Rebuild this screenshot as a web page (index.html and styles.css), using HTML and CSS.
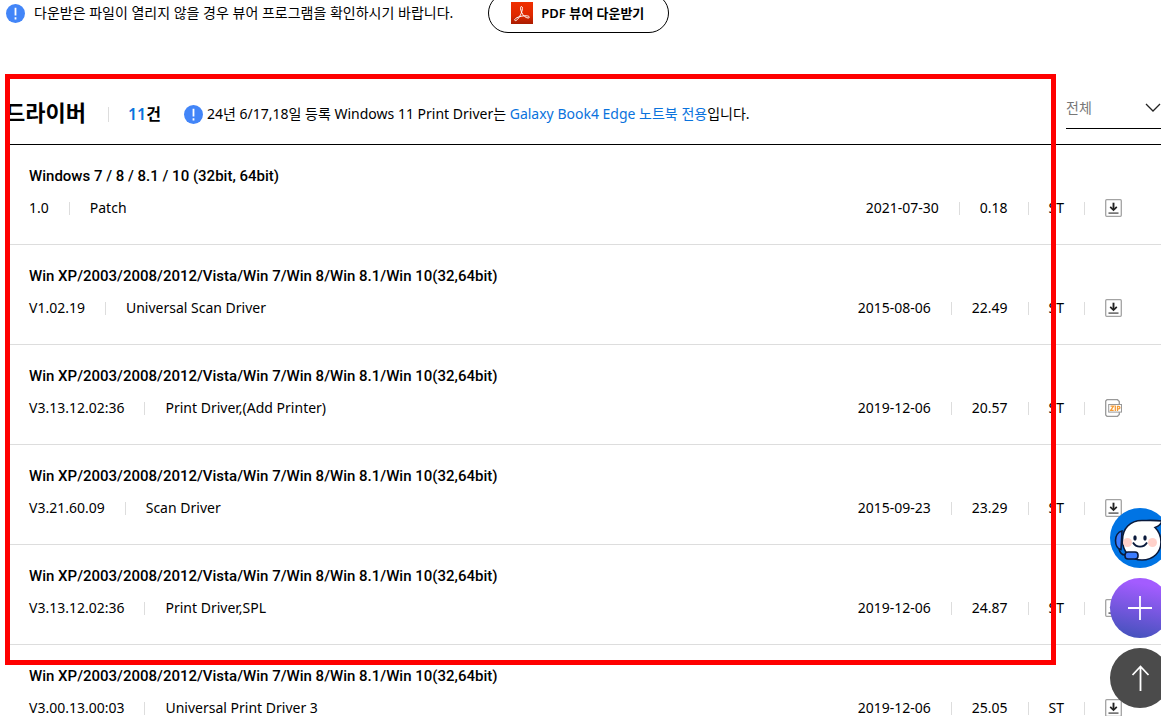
FILE: index.html
```html
<!DOCTYPE html>
<html lang="ko">
<head>
<meta charset="utf-8">
<title>드라이버 다운로드</title>
<link rel="stylesheet" href="styles.css">
</head>
<body>
<svg class="defs" aria-hidden="true">
  <symbol id="notice" viewBox="0 0 18 18"><circle cx="9" cy="9" r="9" fill="#4285f8"/><path d="M9 3.5v7.5M9 12.6v2" stroke="#fff" stroke-width="1.7"/></symbol>
  <symbol id="download" viewBox="0 0 17 18"><rect x=".7" y=".7" width="15.6" height="16.6" rx="1" fill="#fff" stroke="#a3a3a3" stroke-width="1.3"/><path d="M3.5 14.1h10" stroke="#555" stroke-width="1.4"/><path d="M8.5 3.7v7" stroke="#222" stroke-width="1.9"/><path d="M5.2 7.8l3.3 3.3 3.3-3.3" fill="none" stroke="#222" stroke-width="1.7"/></symbol>
  <symbol id="zip" viewBox="0 0 17 18"><path d="M14.3 5V2.5L12.5.7H2L.7 2v14L2 17.3h10.5l1.8-1.8V13" fill="#fff" stroke="#999" stroke-width="1.3"/><rect x="3.7" y="5.5" width="12.8" height="7.6" fill="#fff" stroke="#999"/><path d="M5.5 7.2h3l-2.8 4.2h3M10.3 6.6v5.3M12.5 12V7.3h1.2q1.2 0 1.2 1.2t-1.2 1.3h-1" fill="none" stroke="#f59b35" stroke-width="1.3"/></symbol>
</svg>

<div class="viewer">
  <p class="viewer-note"><svg class="icon-notice"><use href="#notice"/></svg>다운받은 파일이 열리지 않을 경우 뷰어 프로그램을 확인하시기 바랍니다.</p>
  <button class="pdf" type="button">
    <svg class="pdf-icon" viewBox="0 0 22 22">
      <defs><linearGradient id="red" x2="0" y2="1"><stop offset="0" stop-color="#f02f00"/><stop offset=".6" stop-color="#df2800"/><stop offset="1" stop-color="#a91c00"/></linearGradient></defs>
      <path fill="url(#red)" d="M0 0h22v22H0z"/>
      <path d="M10.5 4.5c-1.700 0-1 3.200.2 6 1.300 3 4 5.400 6.400 5.500 1.800 0 1.800-1.700-.6-2.100-3.500-.5-7.800.4-10.600 1.800-2.600 1.300-2.700 3-1.300 2.900 2-.2 4.800-5 6.100-8.700.8-2.500 1.100-5.400-.2-5.400z" fill="none" stroke="#fff" stroke-width="1"/>
    </svg>
    <span>PDF 뷰어 다운받기</span>
  </button>
</div>

<main class="drivers">
  <header class="drivers-head">
    <h2>드라이버</h2>
    <span class="count"><b>11</b>건</span>
    <p class="head-note"><svg class="icon-notice"><use href="#notice"/></svg><span>24년 6/17,18일 등록 Windows 11 Print Driver는 <a href="#galaxy">Galaxy Book4 Edge 노트북 전용</a>입니다.</span></p>
    <div class="filter">
      <select aria-label="분류"><option>전체</option></select>
      <svg class="chevron" viewBox="0 0 16 9"><path d="M1 1l7 7 7-7" fill="none" stroke="#222" stroke-width="1.3"/></svg>
    </div>
  </header>
  <ul class="list">
    <li class="row">
      <h3>Windows 7 / 8 / 8.1 / 10 (32bit, 64bit)</h3>
      <div class="meta"><span>1.0</span><span>Patch</span><span class="date">2021-07-30</span><span>0.18</span><span>ST</span><a href="#d1" aria-label="다운로드"><svg class="file"><use href="#download"/></svg></a></div>
    </li>
    <li class="row">
      <h3>Win XP/2003/2008/2012/Vista/Win 7/Win 8/Win 8.1/Win 10(32,64bit)</h3>
      <div class="meta"><span>V1.02.19</span><span>Universal Scan Driver</span><span class="date">2015-08-06</span><span>22.49</span><span>ST</span><a href="#d2" aria-label="다운로드"><svg class="file"><use href="#download"/></svg></a></div>
    </li>
    <li class="row">
      <h3>Win XP/2003/2008/2012/Vista/Win 7/Win 8/Win 8.1/Win 10(32,64bit)</h3>
      <div class="meta"><span>V3.13.12.02:36</span><span>Print Driver,(Add Printer)</span><span class="date">2019-12-06</span><span>20.57</span><span>ST</span><a href="#d3" aria-label="ZIP 다운로드"><svg class="file"><use href="#zip"/></svg></a></div>
    </li>
    <li class="row">
      <h3>Win XP/2003/2008/2012/Vista/Win 7/Win 8/Win 8.1/Win 10(32,64bit)</h3>
      <div class="meta"><span>V3.21.60.09</span><span>Scan Driver</span><span class="date">2015-09-23</span><span>23.29</span><span>ST</span><a href="#d4" aria-label="다운로드"><svg class="file"><use href="#download"/></svg></a></div>
    </li>
    <li class="row">
      <h3>Win XP/2003/2008/2012/Vista/Win 7/Win 8/Win 8.1/Win 10(32,64bit)</h3>
      <div class="meta"><span>V3.13.12.02:36</span><span>Print Driver,SPL</span><span class="date">2019-12-06</span><span>24.87</span><span>ST</span><a href="#d5" aria-label="다운로드"><svg class="file"><use href="#download"/></svg></a></div>
    </li>
    <li class="row">
      <h3>Win XP/2003/2008/2012/Vista/Win 7/Win 8/Win 8.1/Win 10(32,64bit)</h3>
      <div class="meta"><span>V3.00.13.00:03</span><span>Universal Print Driver 3</span><span class="date">2019-12-06</span><span>25.05</span><span>ST</span><a href="#d6" aria-label="다운로드"><svg class="file"><use href="#download"/></svg></a></div>
    </li>
  </ul>
  <div class="highlight"></div>
</main>

<div class="floating">
  <button type="button" aria-label="상담">
    <svg viewBox="0 0 60 60"><circle cx="30" cy="30" r="30" fill="#0074e4"/>
      <path d="M12 23c-4 1-6.500 5-6.500 9.500s2 8.500 5.500 9z" fill="#3d7dff" stroke="#0a1a3c" stroke-width="1.600"/>
      <path d="M52 13c-8-1-14-.5-20-.5-12 0-19.500 8-19.500 19.500 0 12 8 20 19.500 20s19-8 19-18c0-6-2.500-11-6-14.500 3-1 6-3.500 7-6.500z" fill="#fff" stroke="#0a1a3c" stroke-width="1.600"/>
      <circle cx="17.500" cy="34.500" r="4.500" fill="#ffd1ca"/><circle cx="42.500" cy="34.500" r="4.500" fill="#ffd1ca"/>
      <ellipse cx="25" cy="30" rx="1.700" ry="2.700" fill="#0a1a3c"/><ellipse cx="35" cy="30" rx="1.700" ry="2.700" fill="#0a1a3c"/>
      <path d="M23 34.500c3 5.500 11 5.500 14 0" fill="none" stroke="#0a1a3c" stroke-width="1.800"/>
      <path d="M9 41c1 4 3 6 6 6" fill="none" stroke="#0a1a3c" stroke-width="1.600"/>
      <rect x="15" y="44" width="13" height="7" rx="3" fill="#3d7dff" stroke="#0a1a3c" stroke-width="1.600"/></svg>
  </button>
  <button type="button" aria-label="더보기">
    <svg viewBox="0 0 60 60"><defs><linearGradient id="violet" x1=".6" y1="0" x2=".4" y2="1"><stop offset=".1" stop-color="#a35cff"/><stop offset="1" stop-color="#4652bd"/></linearGradient></defs><circle cx="30" cy="30" r="30" fill="url(#violet)"/><path d="M18 30h24M30 18v24" stroke="#fff" stroke-width="1.800"/></svg>
  </button>
  <button type="button" aria-label="맨 위로">
    <svg viewBox="0 0 60 60"><circle cx="30" cy="30" r="30" fill="#4b4b4b"/><path d="M30.500 43V19M22.500 27l8-8.500 8 8.500" fill="none" stroke="#fff" stroke-width="1.800"/></svg>
  </button>
</div>
</body>
</html>
```
FILE: styles.css
```css
* { box-sizing: border-box; }
html, body { height: 100%; overflow: hidden; }
body {
  margin: 0;
  background: #fff;
  color: #000;
  font: 400 14px/24px "Noto Sans", "Noto Sans CJK KR", sans-serif;
}
h2, h3, p, ul { margin: 0; padding: 0; }
ul { list-style: none; }
a { color: #0a73dd; text-decoration: none; }
button, select { font: inherit; color: inherit; }
.defs { display: none; }

.viewer {
  display: flex;
  align-items: center;
  gap: 35px;
  height: 40px;
  margin-top: -7px;
  padding-left: 6px;
}
.viewer-note { display: flex; align-items: center; gap: 9px; }
.icon-notice { flex: none; width: 19px; height: 19px; }
.pdf {
  display: flex;
  align-items: center;
  gap: 8px;
  height: 40px;
  padding: 0 24px 0 22px;
  border: 1px solid #000;
  border-radius: 20px;
  background: #fff;
  font-size: 13px;
  font-weight: 600;
}
.pdf-icon { width: 22px; height: 22px; }

.drivers { position: relative; margin-top: 41px; padding-left: 5px; }
.drivers-head {
  display: flex;
  align-items: center;
  height: 71px;
  padding-top: 6px;
  border-bottom: 1px solid #000;
}
h2 { font-size: 22px; line-height: 32px; font-weight: 700; }
.count, .head-note { display: flex; align-items: center; padding-top: 4px; }
.count { margin-left: 22px; font-size: 16px; font-weight: 600; }
.count::before { content: ""; width: 1px; height: 15px; margin-right: 19px; background: #ddd; }
.count b { color: #0a73dd; font-weight: inherit; }
.head-note { gap: 4px; margin-left: 23px; }
.filter {
  display: flex;
  align-items: center;
  align-self: flex-start;
  width: 95px;
  height: 42px;
  margin: 7px 0 0 auto;
  border-bottom: 1px solid #000;
}
.filter select {
  flex: 1;
  min-width: 0;
  padding: 0;
  border: 0;
  background: none;
  appearance: none;
  color: #777;
}
.chevron { flex: none; width: 16px; height: 9px; }

.row { padding: 19px 39px 24px 24px; border-bottom: 1px solid #ddd; }
h3 {
  margin-bottom: 8px;
  font: 500 15px/24px Roboto, "Noto Sans CJK KR", sans-serif;
}
.meta { display: flex; align-items: center; height: 24px; }
.meta > * { display: flex; align-items: center; }
.meta > * + *::before { content: ""; width: 1px; height: 13px; margin: 0 20px; background: #ddd; }
.meta .date { margin-left: auto; }
.meta .date::before { display: none; }
.file { width: 17px; height: 18px; }

.highlight {
  position: absolute;
  top: 0;
  left: 5px;
  right: 105px;
  height: 591px;
  border: 5px solid #f00;
  pointer-events: none;
}
.floating {
  position: fixed;
  right: -9px;
  bottom: 8px;
  display: flex;
  flex-direction: column;
  gap: 10px;
}
.floating button { width: 60px; height: 60px; padding: 0; border: 0; border-radius: 50%; background: none; }
.floating svg { display: block; width: 60px; height: 60px; }
```
